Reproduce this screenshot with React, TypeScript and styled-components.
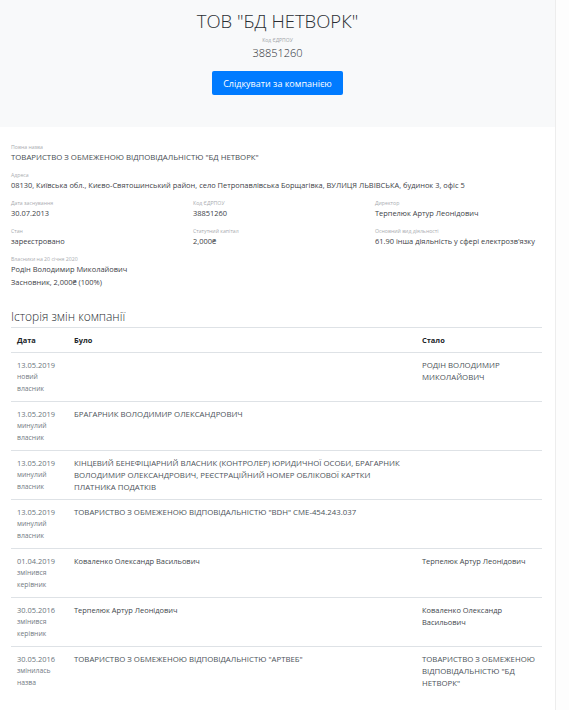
import React from "react";
import styled, { createGlobalStyle } from "styled-components";

const GlobalStyle = createGlobalStyle`
  html, body { margin: 0; padding: 0; background: #fff; }
  body {
    font-family: "Open Sans", "Noto Sans", sans-serif;
    color: #212529;
  }
  * { box-sizing: border-box; }
`;

const Page = styled.div`
  display: flex;
  min-height: 710px;
`;

const Main = styled.div`
  width: 555px;
  flex: none;
`;

const ScrollStrip = styled.div`
  flex: 1;
  border-left: 1px solid #ededed;
  background: #fdfdfd;
`;

const Jumbotron = styled.header`
  height: 127px;
  background: #f8f9fa;
  display: flex;
  flex-direction: column;
  align-items: center;
  padding-top: 9px;
`;

const Title = styled.h1`
  margin: 0;
  font-size: 18.5px;
  font-weight: 300;
  line-height: 24px;
  color: #2a2e33;
`;

const CodeLabel = styled.div`
  margin-top: 4px;
  font-size: 5px;
  line-height: 7px;
  color: #a0a4a8;
`;

const CodeValue = styled.div`
  margin-top: 1px;
  font-size: 11px;
  font-weight: 300;
  line-height: 15px;
  color: #2a2e33;
`;

const FollowButton = styled.button`
  margin-top: 11px;
  height: 24px;
  width: 131px;
  border: none;
  border-radius: 2px;
  background: #007bff;
  color: #fff;
  font-family: inherit;
  font-size: 9px;
  padding: 0;
  cursor: pointer;
`;

const Content = styled.main`
  padding: 16px 13px 0 11px;
`;

const FieldGrid = styled.div`
  display: grid;
  grid-template-columns: 182px 182px 1fr;
`;

const Field = styled.div<{ $span?: boolean }>`
  grid-column: ${(p) => (p.$span ? "1 / -1" : "auto")};
  margin-bottom: 8px;
`;

const Label = styled.div`
  font-size: 5.2px;
  line-height: 8px;
  color: #a9acb0;
`;

const Value = styled.div<{ $lh?: number; $upper?: boolean }>`
  font-size: ${(p) => (p.$upper ? 7.8 : 7.45)}px;
  line-height: ${(p) => p.$lh ?? 12}px;
  color: ${(p) => (p.$upper ? "#474d53" : "#3d4247")};
`;

const SectionTitle = styled.h2`
  margin: 12px 0 2px;
  font-size: 12px;
  font-weight: 300;
  line-height: 16px;
  color: #2a2e33;
`;

const Table = styled.table`
  width: 100%;
  border-collapse: collapse;
  font-size: 7.45px;
  line-height: 12px;
`;

const Th = styled.th<{ $w?: number }>`
  text-align: left;
  font-weight: 700;
  padding: 6px;
  color: #212529;
  border-top: 1px solid #dee2e6;
  border-bottom: 1px solid #dee2e6;
  width: ${(p) => (p.$w ? `${p.$w}px` : "auto")};
`;

const Td = styled.td`
  vertical-align: top;
  padding: 6px;
  border-top: 1px solid #dee2e6;
  color: #42474c;
`;

const DateText = styled.div`
  color: #6c757d;
`;

const EventText = styled.div`
  color: #737b83;
  font-size: 6.8px;
`;

const Upper = styled.span`
  font-size: 7.8px;
  color: #4c535a;
`;

type Row = {
  date: string;
  event: string;
  was: string;
  now: string;
  upper?: boolean;
};

const rows: Row[] = [
  { date: "13.05.2019", event: "новий власник", was: "", now: "РОДІН ВОЛОДИМИР МИКОЛАЙОВИЧ", upper: true },
  { date: "13.05.2019", event: "минулий власник", was: "БРАГАРНИК ВОЛОДИМИР ОЛЕКСАНДРОВИЧ", now: "", upper: true },
  {
    date: "13.05.2019",
    event: "минулий власник",
    was: "КІНЦЕВИЙ БЕНЕФІЦІАРНИЙ ВЛАСНИК (КОНТРОЛЕР) ЮРИДИЧНОЇ ОСОБИ, БРАГАРНИК ВОЛОДИМИР ОЛЕКСАНДРОВИЧ, РЕЄСТРАЦІЙНИЙ НОМЕР ОБЛІКОВОЇ КАРТКИ ПЛАТНИКА ПОДАТКІВ",
    now: "",
    upper: true,
  },
  { date: "13.05.2019", event: "минулий власник", was: "ТОВАРИСТВО З ОБМЕЖЕНОЮ ВІДПОВІДАЛЬНІСТЮ \"BDH\" CME-454.243.037", now: "", upper: true },
  { date: "01.04.2019", event: "змінився керівник", was: "Коваленко Олександр Васильович", now: "Терпелюк Артур Леонідович" },
  { date: "30.05.2016", event: "змінився керівник", was: "Терпелюк Артур Леонідович", now: "Коваленко Олександр Васильович" },
  {
    date: "30.05.2016",
    event: "змінилась назва",
    was: "ТОВАРИСТВО З ОБМЕЖЕНОЮ ВІДПОВІДАЛЬНІСТЮ \"АРТВЕБ\"",
    now: "ТОВАРИСТВО З ОБМЕЖЕНОЮ ВІДПОВІДАЛЬНІСТЮ \"БД НЕТВОРК\"",
    upper: true,
  },
];

const Cell = ({ text, upper }: { text: string; upper?: boolean }) =>
  upper ? <Upper>{text}</Upper> : <>{text}</>;

export default function App() {
  return (
    <>
      <GlobalStyle />
      <Page>
        <Main>
          <Jumbotron>
            <Title>ТОВ "БД НЕТВОРК"</Title>
            <CodeLabel>Код ЄДРПОУ</CodeLabel>
            <CodeValue>38851260</CodeValue>
            <FollowButton>Слідкувати за компанією</FollowButton>
          </Jumbotron>
          <Content>
            <FieldGrid>
              <Field $span>
                <Label>Повна назва</Label>
                <Value $upper>ТОВАРИСТВО З ОБМЕЖЕНОЮ ВІДПОВІДАЛЬНІСТЮ "БД НЕТВОРК"</Value>
              </Field>
              <Field $span>
                <Label>Адреса</Label>
                <Value>
                  08130, Київська обл., Києво-Святошинський район, село Петропавлівська Борщагівка, ВУЛИЦЯ ЛЬВІВСЬКА, будинок 3, офіс 5
                </Value>
              </Field>
              <Field>
                <Label>Дата заснування</Label>
                <Value>30.07.2013</Value>
              </Field>
              <Field>
                <Label>Код ЄДРПОУ</Label>
                <Value>38851260</Value>
              </Field>
              <Field>
                <Label>Директор</Label>
                <Value>Терпелюк Артур Леонідович</Value>
              </Field>
              <Field>
                <Label>Стан</Label>
                <Value>зареєстровано</Value>
              </Field>
              <Field>
                <Label>Статутний капітал</Label>
                <Value>2,000₴</Value>
              </Field>
              <Field>
                <Label>Основний вид діяльності</Label>
                <Value>61.90 інша діяльність у сфері електрозв'язку</Value>
              </Field>
              <Field $span>
                <Label>Власники на 20 січня 2020</Label>
                <Value $lh={13}>Родін Володимир Миколайович</Value>
                <Value $lh={13}>Засновник, 2,000₴ (100%)</Value>
              </Field>
            </FieldGrid>
            <SectionTitle>Історія змін компанії</SectionTitle>
            <Table>
              <thead>
                <tr>
                  <Th $w={57}>Дата</Th>
                  <Th>Було</Th>
                  <Th $w={126}>Стало</Th>
                </tr>
              </thead>
              <tbody>
                {rows.map((r, i) => (
                  <tr key={i}>
                    <Td>
                      <DateText>{r.date}</DateText>
                      <EventText>{r.event}</EventText>
                    </Td>
                    <Td>
                      <Cell text={r.was} upper={r.upper} />
                    </Td>
                    <Td>
                      <Cell text={r.now} upper={r.upper} />
                    </Td>
                  </tr>
                ))}
              </tbody>
            </Table>
          </Content>
        </Main>
        <ScrollStrip />
      </Page>
    </>
  );
}
